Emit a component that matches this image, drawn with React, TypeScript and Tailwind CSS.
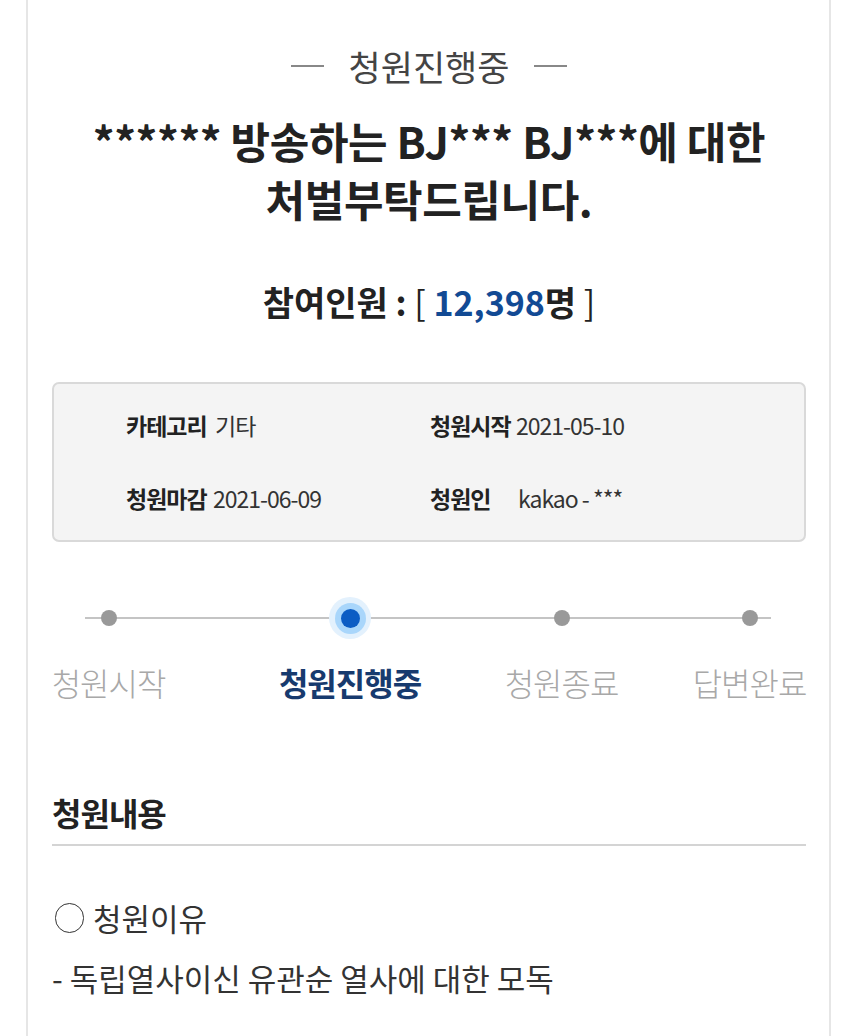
const font = { fontFamily: '"Noto Sans CJK KR", "Noto Sans", sans-serif' }

const steps = [
  { label: "청원시작", width: "w-[113px]", ml: "ml-0", active: false },
  { label: "청원진행중", width: "w-[140px]", ml: "ml-[115px]", active: true },
  { label: "청원종료", width: "w-[113px]", ml: "ml-[85px]", active: false },
  { label: "답변완료", width: "w-[113px]", ml: "ml-[75px]", active: false },
]

const InfoItem = ({ label, value, labelWidth }: { label: string; value: string; labelWidth: string }) => (
  <div className="flex items-center text-[23px] leading-[32px] tracking-[-1px] text-[#333]">
    <span className={`${labelWidth} font-bold text-[#222]`}>{label}</span>
    <span>{value}</span>
  </div>
)

export default function App() {
  return (
    <div className="min-h-[1036px] bg-white" style={font}>
      <div className="ml-[26px] mr-[19px] min-h-[1036px] border-x-2 border-[#e6e6e6] pl-[24px] pr-[23px]">
        <div className="flex items-center justify-center gap-[24px] pt-[43px] text-[35px] leading-[46px] text-[#444]">
          <span className="h-[2px] w-[33px] bg-[#888]" />
          <span>청원진행중</span>
          <span className="h-[2px] w-[33px] bg-[#888]" />
        </div>

        <h1 className="mt-[22px] text-center text-[43px] font-bold leading-[58px] tracking-[-0.4px] text-[#222]">
          ****** 방송하는 BJ*** BJ***에 대한
          <br />
          처벌부탁드립니다.
        </h1>

        <div className="mt-[52px] text-center text-[34px] font-bold leading-[46px] text-[#222]">
          참여인원 : <span className="font-normal">[</span>{" "}
          <span className="text-[#124a94]">12,398</span>명 <span className="font-normal">]</span>
        </div>

        <div className="mt-[57px] rounded-[7px] border-2 border-[#d9d9d9] bg-[#f4f4f4] pb-[26px] pl-[72px] pt-[25px]">
          <div className="grid grid-cols-[304px_1fr] gap-y-[41px]">
            <InfoItem label="카테고리" value="기타" labelWidth="w-[89px]" />
            <InfoItem label="청원시작" value="2021-05-10" labelWidth="w-[86px]" />
            <InfoItem label="청원마감" value="2021-06-09" labelWidth="w-[87px]" />
            <InfoItem label="청원인" value="kakao - ***" labelWidth="w-[88px]" />
          </div>
        </div>

        <div className="relative mt-[58px]">
          <div className="absolute left-[33px] right-[35px] top-[17px] h-[2px] bg-[#c4c4c4]" />
          <div className="relative flex">
            {steps.map((s) => (
              <div key={s.label} className={`${s.width} ${s.ml} flex flex-col items-center`}>
                <div className="flex h-[36px] w-[40px] items-center justify-center">
                  {s.active ? (
                    <div className="flex h-[42px] w-[42px] shrink-0 items-center justify-center rounded-full bg-[#e3f1fd]">
                      <div className="flex h-[31px] w-[31px] items-center justify-center rounded-full bg-[#a9d6fb]">
                        <div className="h-[19px] w-[19px] rounded-full bg-[#0b5cc4]" />
                      </div>
                    </div>
                  ) : (
                    <div className="h-[16px] w-[16px] rounded-full bg-[#999]" />
                  )}
                </div>
                <div
                  className={`mt-[24px] whitespace-nowrap text-[32px] leading-[44px] tracking-[-1px] ${
                    s.active ? "font-bold text-[#173a6e]" : "font-light text-[#a8a8a8]"
                  }`}
                >
                  {s.label}
                </div>
              </div>
            ))}
          </div>
        </div>

        <h2 className="mt-[86px] text-[32px] font-bold leading-[44px] tracking-[-1px] text-[#222]">청원내용</h2>
        <div className="mt-[10px] h-[2px] bg-[#d4d4d4]" />

        <div className="mt-[50px] flex items-center gap-[9px] text-[31px] leading-[44px] text-[#333]">
          <span className="ml-[3px] inline-block h-[30px] w-[29px] rounded-full border-[1.5px] border-[#333]" />
          <span>청원이유</span>
        </div>
        <p className="mt-[16px] text-[31px] leading-[44px] text-[#333]">- 독립열사이신 유관순 열사에 대한 모독</p>
      </div>
    </div>
  )
}
